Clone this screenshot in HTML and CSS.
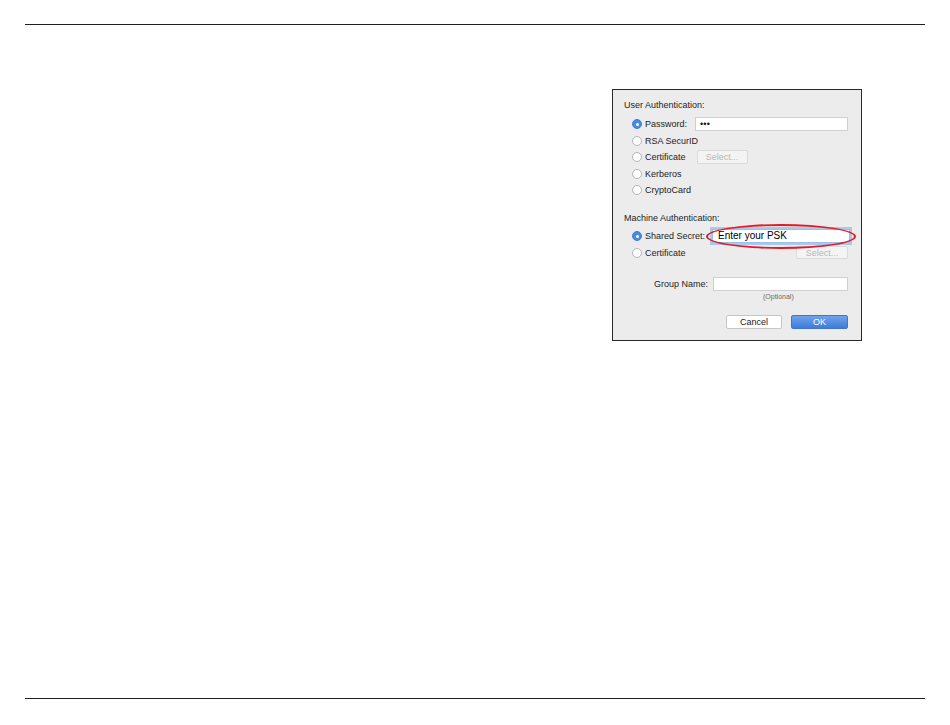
FILE: index.html
```html
<!DOCTYPE html>
<html>
<head>
<meta charset="utf-8">
<link rel="stylesheet" href="styles.css">
</head>
<body>
<div class="page">
  <div class="rule"></div>
  <div class="content">
    <div class="dialog">
      <div class="heading first">User Authentication:</div>
      <div class="row">
        <span class="radio on"></span><span class="label">Password:</span>
        <span class="field pw">•••</span>
      </div>
      <div class="row"><span class="radio"></span><span class="label">RSA SecurID</span></div>
      <div class="row">
        <span class="radio"></span><span class="label">Certificate</span>
        <span class="btn select">Select...</span>
      </div>
      <div class="row"><span class="radio"></span><span class="label">Kerberos</span></div>
      <div class="row"><span class="radio"></span><span class="label">CryptoCard</span></div>

      <div class="heading second">Machine Authentication:</div>
      <div class="row">
        <span class="radio on"></span><span class="label">Shared Secret:</span>
        <span class="field psk">Enter your PSK</span>
      </div>
      <div class="row">
        <span class="radio"></span><span class="label">Certificate</span>
        <span class="btn select right">Select...</span>
      </div>

      <div class="group">
        <span class="label">Group Name:</span>
        <span class="field gn"></span>
      </div>
      <div class="optional">(Optional)</div>

      <div class="actions">
        <span class="btn cancel">Cancel</span>
        <span class="btn ok">OK</span>
      </div>

      <div class="ellipse"></div>
    </div>
  </div>
  <div class="rule"></div>
</div>
</body>
</html>
```

FILE: styles.css
```css
html, body {
  margin: 0;
  padding: 0;
  background: #ffffff;
}
body {
  font-family: "Liberation Sans", Arial, sans-serif;
  color: #1a1a1a;
}
.page {
  width: 900px;
  padding: 24px 25px 0 25px;
}
.rule {
  height: 0;
  border-top: 1.5px solid #1f1f1f;
}
.content {
  height: 673px;
  padding-top: 64px;
  box-sizing: border-box;
}
.dialog {
  position: relative;
  margin-left: 587px;
  width: 250px;
  height: 252px;
  box-sizing: border-box;
  border: 1px solid #2a2a2a;
  background: #ececec;
  padding: 9px 13px 0 11px;
  font-size: 9px;
}
.heading {
  height: 12px;
  line-height: 12px;
  color: #1c1c1c;
}
.heading.first {
  margin-bottom: 5px;
}
.heading.second {
  margin-top: 13.5px;
  margin-bottom: 4px;
}
.row {
  height: 16.5px;
  display: flex;
  align-items: center;
  padding-left: 8px;
}
.radio {
  width: 10px;
  height: 10px;
  border-radius: 50%;
  border: 1px solid #b4b4b4;
  background: #ffffff;
  margin-right: 3px;
  flex: none;
  position: relative;
  box-sizing: border-box;
}
.radio.on {
  border-color: #3d7fd8;
  background: #4a8ae0;
}
.radio.on::after {
  content: "";
  position: absolute;
  left: 2.5px;
  top: 2.5px;
  width: 3px;
  height: 3px;
  border-radius: 50%;
  background: #ffffff;
}
.label {
  line-height: 12px;
  color: #1c1c1c;
  white-space: nowrap;
}
.field {
  display: block;
  background: #ffffff;
  border: 1px solid #cfcfcf;
  box-sizing: border-box;
  height: 14px;
  line-height: 12px;
  padding-left: 5px;
  color: #111;
}
.field.pw {
  margin-left: auto;
  width: 153px;
  font-size: 9px;
  letter-spacing: 0.2px;
  padding-left: 4px;
}
.field.psk {
  margin-left: auto;
  margin-right: -2px;
  width: 138px;
  font-size: 10px;
  color: #000;
  border: 1px solid #9bbfe9;
  box-shadow: 0 0 0 2px #aac9ef;
  position: relative;
  z-index: 1;
}
.btn {
  display: flex;
  align-items: center;
  justify-content: center;
  box-sizing: border-box;
  height: 14px;
  border-radius: 2px;
  font-size: 9px;
}
.select {
  width: 51px;
  margin-left: 11px;
  background: #f4f4f4;
  border: 1px solid #dadada;
  color: #b6b6b6;
}
.select.right {
  margin-left: auto;
  width: 52px;
  height: 13px;
}
.group {
  margin-top: 15px;
  height: 16px;
  display: flex;
  align-items: center;
  justify-content: flex-end;
}
.group .label {
  margin-right: 5px;
}
.field.gn {
  width: 135px;
  height: 14px;
}
.optional {
  height: 10px;
  line-height: 10px;
  font-size: 7px;
  color: #6a6a6a;
  padding-left: 139px;
}
.actions {
  margin-top: 13px;
  display: flex;
  justify-content: flex-end;
  gap: 9px;
}
.cancel {
  width: 56px;
  height: 14px;
  background: #ffffff;
  border: 1px solid #c6c6c6;
  color: #1a1a1a;
}
.ok {
  width: 57px;
  height: 14px;
  background: linear-gradient(#6fa3ec, #3f7bd8);
  border: 1px solid #3f77cf;
  color: #ffffff;
}
.ellipse {
  position: absolute;
  left: 93px;
  top: 134px;
  width: 146px;
  height: 21px;
  border: 2.5px solid #e01b25;
  border-radius: 50%;
  pointer-events: none;
  z-index: 2;
}
```
